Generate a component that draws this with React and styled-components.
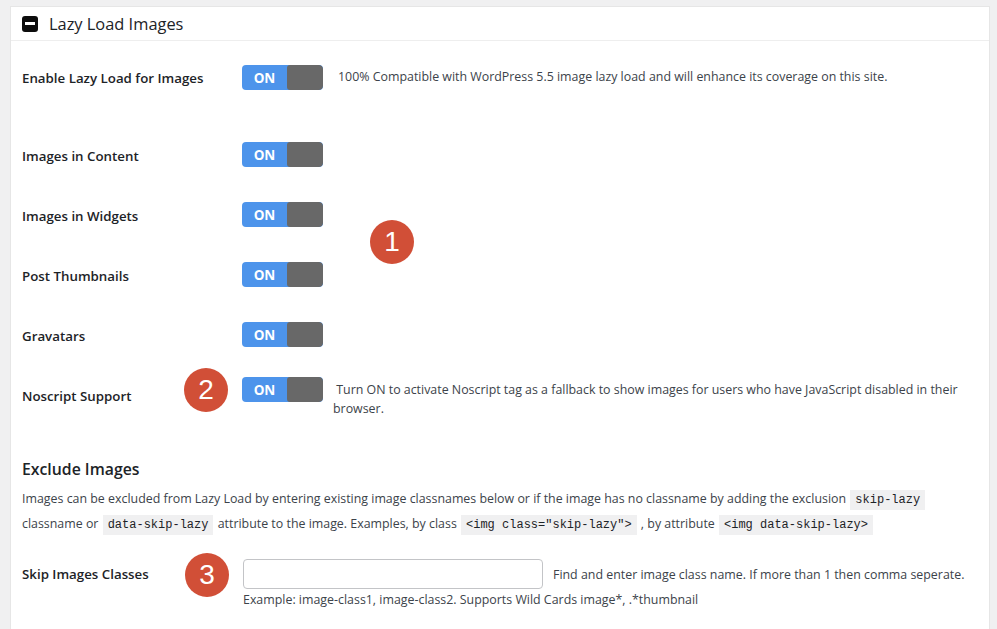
import React from "react";
import styled, { createGlobalStyle } from "styled-components";

const Global = createGlobalStyle`
  html, body { margin: 0; padding: 0; }
  body {
    background: #f0f0f1;
    font-family: "Open Sans", "Noto Sans", sans-serif;
    color: #3c434a;
  }
  * { box-sizing: border-box; }
`;

const Page = styled.div`
  position: relative;
  width: 997px;
  height: 629px;
  overflow: hidden;
  padding: 6px 7px 0 10px;
`;

const Panel = styled.section`
  background: #fff;
  border: 1px solid #e6e6e6;
  border-bottom: none;
  height: 100%;
`;

const Header = styled.div`
  height: 34px;
  border-bottom: 1px solid #eeeeee;
  display: flex;
  align-items: center;
  gap: 11px;
  padding-left: 11px;
`;

const ToggleIcon = styled.span`
  width: 16px;
  height: 16px;
  border-radius: 3px;
  background: #0d0d0d;
  display: flex;
  align-items: center;
  justify-content: center;
  &::after {
    content: "";
    width: 10px;
    height: 3px;
    background: #fff;
  }
`;

const Title = styled.h2`
  margin: 0;
  font-size: 16.4px;
  font-weight: 400;
  color: #1d2327;
`;

const Body = styled.div`
  padding: 0 11px;
`;

const Row = styled.div`
  display: grid;
  grid-template-columns: 220px auto 1fr;
  align-items: start;
  margin-top: ${(p) => p.$mt}px;
`;

const Label = styled.div`
  font-size: 13.3px;
  font-weight: 600;
  line-height: 18px;
  color: #1d2327;
  padding-top: ${(p) => p.$pt || 0}px;
`;

const Switch = styled.div`
  width: 81px;
  height: 25px;
  border-radius: 4px;
  background: #4d94eb;
  display: flex;
  overflow: hidden;
`;

const SwitchOn = styled.span`
  width: 45px;
  display: flex;
  align-items: center;
  justify-content: center;
  color: #fff;
  font-weight: 700;
  font-size: 13.5px;
  font-family: "Open Sans", sans-serif;
`;

const Knob = styled.span`
  flex: 1;
  background: #686868;
  border-radius: 3px 4px 4px 3px;
`;

const Desc = styled.div`
  font-size: 12.4px;
  line-height: 19px;
  padding-left: ${(p) => p.$pl}px;
  padding-top: ${(p) => p.$pt || 0}px;
  color: #3c434a;
`;

const SectionTitle = styled.h3`
  margin: 40px 0 0;
  font-size: 15.8px;
  font-weight: 600;
  line-height: 22px;
  color: #1d2327;
`;

const Para = styled.p`
  margin: 7px 0 0;
  font-size: 12.4px;
  line-height: 23px;
  color: #3c434a;
`;

const Code = styled.code`
  font-family: "Liberation Mono", monospace;
  font-size: 12px;
  background: #f0f0f1;
  padding: 3px 5px;
  margin: 0 1px;
  color: #1d2327;
`;

const FieldRow = styled.div`
  display: grid;
  grid-template-columns: 221px auto 1fr;
  align-items: center;
  margin-top: 22px;
`;

const Input = styled.input`
  width: 300px;
  height: 30px;
  border: 1px solid #c3c4c7;
  border-radius: 4px;
  background: #fff;
  padding: 0 8px;
  font: inherit;
`;

const Hint = styled.span`
  font-size: 12.4px;
  padding-left: 10px;
  color: #3c434a;
`;

const Example = styled.div`
  margin: 1px 0 0 221px;
  font-size: 12.4px;
  line-height: 19px;
  color: #3c434a;
`;

const Badge = styled.div`
  position: absolute;
  left: ${(p) => p.$x - 22}px;
  top: ${(p) => p.$y - 22}px;
  width: 44px;
  height: 44px;
  border-radius: 50%;
  background: #d14f37;
  color: #fff;
  font-family: "Liberation Sans", Arial, sans-serif;
  font-size: 28px;
  display: flex;
  align-items: center;
  justify-content: center;
`;

const Toggle = () => (
  <Switch>
    <SwitchOn>ON</SwitchOn>
    <Knob />
  </Switch>
);

const simpleRows = [
  { label: "Images in Content", mt: 52 },
  { label: "Images in Widgets", mt: 35 },
  { label: "Post Thumbnails", mt: 35 },
  { label: "Gravatars", mt: 35 },
];

export default function App() {
  return (
    <>
      <Global />
      <Page>
        <Panel>
          <Header>
            <ToggleIcon />
            <Title>Lazy Load Images</Title>
          </Header>
          <Body>
            <Row $mt={24}>
              <Label $pt={4}>Enable Lazy Load for Images</Label>
              <Toggle />
              <Desc $pl={15} $pt={2}>
                100% Compatible with WordPress 5.5 image lazy load and will enhance its coverage on this site.
              </Desc>
            </Row>
            {simpleRows.map((r) => (
              <Row key={r.label} $mt={r.mt}>
                <Label $pt={5}>{r.label}</Label>
                <Toggle />
                <div />
              </Row>
            ))}
            <Row $mt={30}>
              <Label $pt={10}>Noscript Support</Label>
              <Toggle />
              <Desc $pl={10} $pt={3}>
                {"\u00a0"}Turn ON to activate Noscript tag as a fallback to show images for users who have JavaScript disabled in their browser.
              </Desc>
            </Row>
            <SectionTitle>Exclude Images</SectionTitle>
            <Para>
              Images can be excluded from Lazy Load by entering existing image classnames below or if the image has no classname by adding the exclusion <Code>skip-lazy</Code> classname or <Code>data-skip-lazy</Code> attribute to the image. Examples, by class <Code>{'<img class="skip-lazy">'}</Code> , by attribute <Code>{"<img data-skip-lazy>"}</Code>
            </Para>
            <FieldRow>
              <Label $pt={0}>Skip Images Classes</Label>
              <Input type="text" />
              <Hint>Find and enter image class name. If more than 1 then comma seperate.</Hint>
            </FieldRow>
            <Example>Example: image-class1, image-class2. Supports Wild Cards image*, .*thumbnail</Example>
          </Body>
        </Panel>
        <Badge $x={392} $y={242}>1</Badge>
        <Badge $x={206} $y={390}>2</Badge>
        <Badge $x={207} $y={575}>3</Badge>
      </Page>
    </>
  );
}
